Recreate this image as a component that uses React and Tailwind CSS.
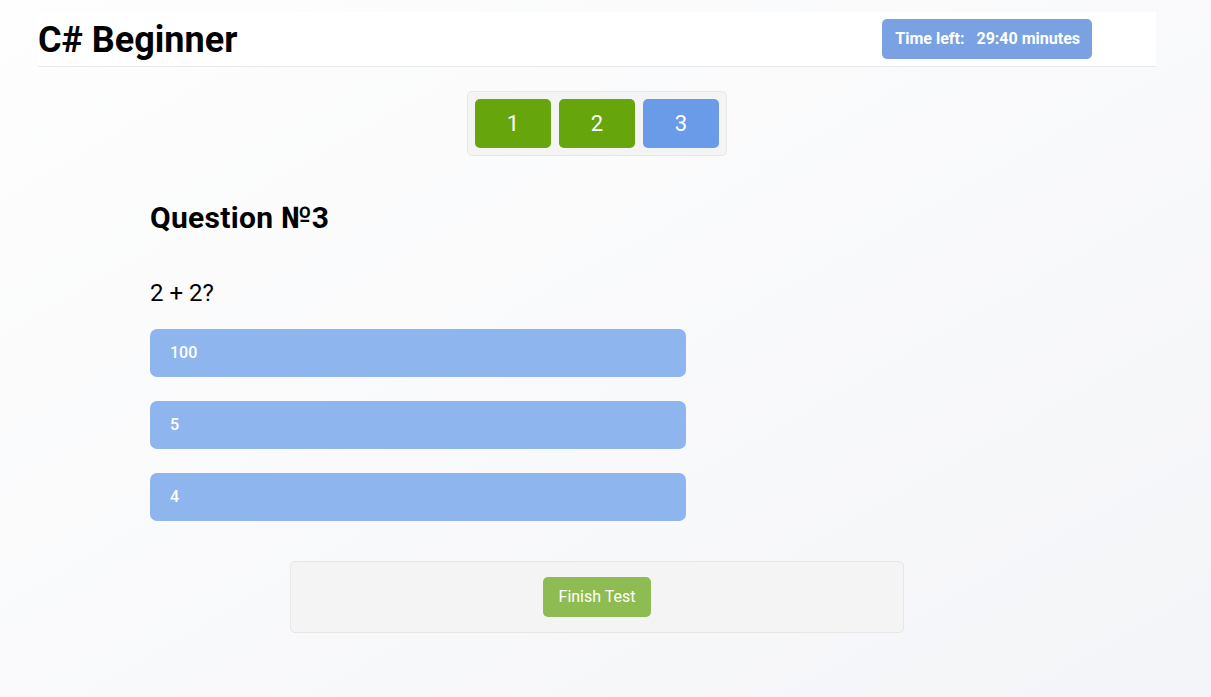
import React, { useState } from 'react';

const QUESTIONS = [
  { id: 1, done: true },
  { id: 2, done: true },
  { id: 3, done: false },
];

const OPTIONS = ['100', '5', '4'];

const App = () => {
  const [current, setCurrent] = useState(3);
  const [picked, setPicked] = useState(null);

  return (
    <div className="min-h-[697px] bg-gradient-to-br from-[#fefefe] to-[#f4f5f8] pt-[12px] font-['Roboto',sans-serif] text-black">
      <div className="ml-[38px] w-[1118px]">
        {/* header */}
        <header className="h-[55px] bg-white border-b border-[#e9e9ec] flex items-center justify-between pr-[64px]">
          <h1 className="text-[36px] leading-[40px] font-bold mt-[1px]">C# Beginner</h1>
          <div className="h-[40px] pl-[13px] pr-[12px] rounded-[5px] bg-[#7aa2e2] text-white text-[16px] font-bold flex items-center gap-[12px]">
            <span>Time left:</span>
            <span>29:40 minutes</span>
          </div>
        </header>

        {/* question nav */}
        <div className="flex justify-center mt-[24px]">
          <div className="flex gap-[8px] p-[7px] bg-[#f4f4f4] border border-[#e8e8e8] rounded-[5px]">
            {QUESTIONS.map((q) => (
              <button
                key={q.id}
                onClick={() => setCurrent(q.id)}
                className={
                  'w-[76px] h-[49px] rounded-[5px] text-white text-[22px] flex items-center justify-center ' +
                  (q.id === current ? 'bg-[#6a9be8]' : q.done ? 'bg-[#66a50b]' : 'bg-[#6a9be8]')
                }
              >
                {q.id}
              </button>
            ))}
          </div>
        </div>

        {/* question body */}
        <div className="ml-[112px] w-[536px]">
          <h2 className="mt-[44px] text-[30px] leading-[36px] font-bold tracking-[0.3px]">Question №3</h2>
          <p className="mt-[43px] text-[24px] leading-[28px]">2 + 2?</p>
          <div className="mt-[22px] flex flex-col gap-[24px]">
            {OPTIONS.map((o) => (
              <button
                key={o}
                onClick={() => setPicked(o)}
                className={
                  'h-[48px] w-full rounded-[7px] text-left pl-[20px] text-white text-[16px] font-medium ' +
                  (picked === o ? 'bg-[#6a9be8]' : 'bg-[#8fb5ef]')
                }
              >
                {o}
              </button>
            ))}
          </div>
        </div>

        {/* footer */}
        <div className="flex justify-center mt-[40px]">
          <div className="w-[614px] h-[72px] bg-[#f4f4f4] border border-[#e6e6e6] rounded-[5px] flex items-center justify-center">
            <button className="h-[40px] px-[16px] rounded-[5px] bg-[#8fbc52] text-white text-[16px]">
              Finish Test
            </button>
          </div>
        </div>
      </div>
    </div>
  );
};

export default App;
